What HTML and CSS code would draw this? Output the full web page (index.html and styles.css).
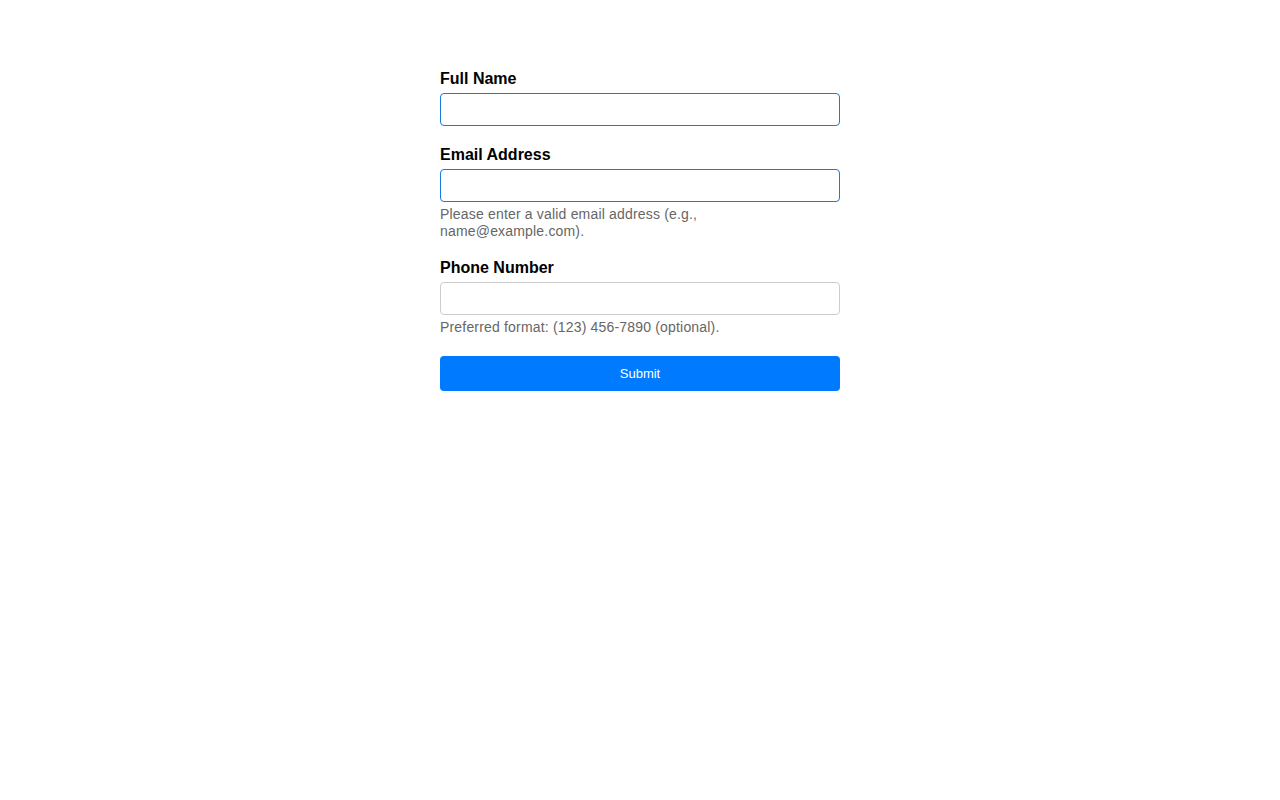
FILE: index.html
```html
<!DOCTYPE html>
<html lang="en">
<head>
<meta charset="utf-8">
<title>Form</title>
<link rel="stylesheet" href="styles.css">
</head>
<body>
<form class="form">
  <div class="field">
    <label class="label" for="name">Full Name</label>
    <input class="input input-active" id="name" type="text">
  </div>
  <div class="field field-help">
    <label class="label" for="email">Email Address</label>
    <input class="input input-active" id="email" type="email">
    <span class="help">Please enter a valid email address (e.g., name@example.com).</span>
  </div>
  <div class="field field-help">
    <label class="label" for="phone">Phone Number</label>
    <input class="input" id="phone" type="tel">
    <span class="help">Preferred format: (123) 456-7890 (optional).</span>
  </div>
  <button class="submit" type="submit">Submit</button>
</form>
</body>
</html>
```
FILE: styles.css
```css
html, body {
  margin: 0;
  padding: 0;
  background: #fff;
}
body {
  font-family: "Liberation Sans", Arial, sans-serif;
  color: #000;
}
.form {
  width: 400px;
  margin: 0 auto;
  padding-top: 69px;
  display: flex;
  flex-direction: column;
}
.field {
  display: flex;
  flex-direction: column;
  margin-bottom: 19px;
}
.field-help {
  margin-bottom: 18px;
}
.label {
  font-size: 16px;
  font-weight: bold;
  line-height: 20px;
  margin-bottom: 4px;
}
.input {
  box-sizing: border-box;
  width: 100%;
  height: 33px;
  margin: 0;
  padding: 6px 8px;
  border: 1px solid #ccc;
  border-radius: 4px;
  font-family: inherit;
  font-size: 14px;
  outline: none;
  background: #fff;
}
.input-active {
  border-color: #1a7ae0;
}
.help {
  max-width: 320px;
  margin-top: 4px;
  font-size: 14px;
  line-height: 17px;
  letter-spacing: 0.18px;
  color: #666;
}
.submit {
  box-sizing: border-box;
  width: 100%;
  height: 35px;
  margin-top: 2px;
  border: none;
  border-radius: 4px;
  background: #007bff;
  color: #fff;
  font-family: inherit;
  font-size: 13px;
  cursor: pointer;
}
```
